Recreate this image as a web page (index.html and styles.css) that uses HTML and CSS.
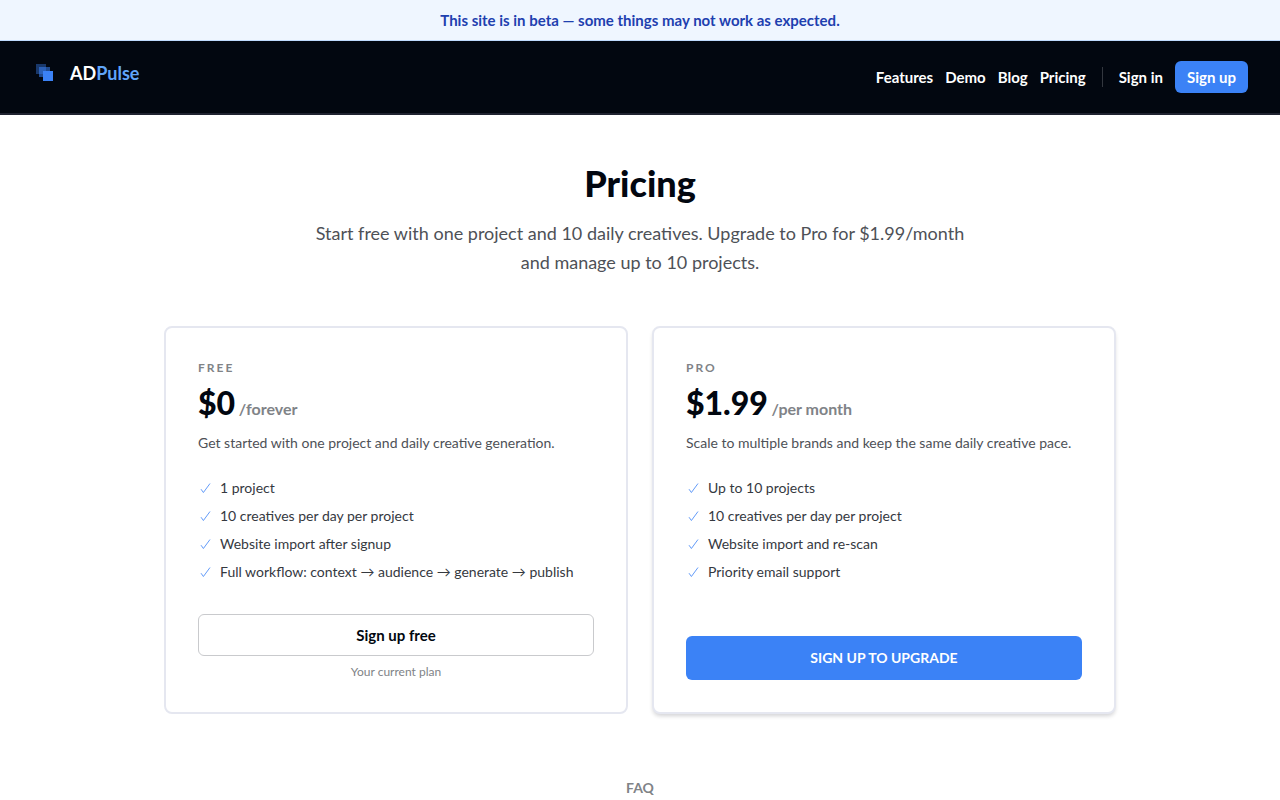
FILE: index.html
```html
<!DOCTYPE html>
<html lang="en">
<head>
    <meta charset="UTF-8">
    <meta name="viewport" content="width=device-width, initial-scale=1">
    <title>Pricing - ADPulse</title>
    <link rel="stylesheet" href="styles.css">
</head>
<body>
    <div class="beta-banner">This site is in beta — some things may not work as expected.</div>

    <header class="header">
        <a href="#" class="logo">
            <svg class="logo-icon" viewBox="0 0 24 24" aria-hidden="true">
                <rect x="4" y="3" width="10" height="10" fill="#3b82f6" opacity="0.4"/>
                <rect x="7" y="6" width="11" height="10" fill="#3b82f6" opacity="0.55"/>
                <rect x="11" y="10" width="10" height="10" fill="#3b82f6"/>
            </svg>
            <span class="logo-text">AD<span class="logo-accent">Pulse</span></span>
        </a>
        <nav class="nav">
            <a href="#features">Features</a>
            <a href="#demo">Demo</a>
            <a href="#blog">Blog</a>
            <a href="#pricing">Pricing</a>
            <span class="nav-divider"></span>
            <a href="#signin">Sign in</a>
            <a href="#signup" class="nav-signup">Sign up</a>
        </nav>
    </header>

    <main class="pricing">
        <h1>Pricing</h1>
        <p class="subtitle">Start free with one project and 10 daily creatives. Upgrade to Pro for $1.99/month and manage up to 10 projects.</p>

        <div class="plans">
            <section class="plan">
                <h2 class="plan-name">Free</h2>
                <p class="price">$0 <span class="period">/forever</span></p>
                <p class="plan-desc">Get started with one project and daily creative generation.</p>
                <ul class="features">
                    <li><svg class="check" viewBox="0 0 14 14"><path d="M3 8.2 5.4 11.5 12 2.5"/></svg>1 project</li>
                    <li><svg class="check" viewBox="0 0 14 14"><path d="M3 8.2 5.4 11.5 12 2.5"/></svg>10 creatives per day per project</li>
                    <li><svg class="check" viewBox="0 0 14 14"><path d="M3 8.2 5.4 11.5 12 2.5"/></svg>Website import after signup</li>
                    <li><svg class="check" viewBox="0 0 14 14"><path d="M3 8.2 5.4 11.5 12 2.5"/></svg>Full workflow: context → audience → generate → publish</li>
                </ul>
                <div class="plan-action">
                    <button type="button" class="btn btn-outline">Sign up free</button>
                    <p class="plan-note">Your current plan</p>
                </div>
            </section>

            <section class="plan plan-pro">
                <h2 class="plan-name">Pro</h2>
                <p class="price">$1.99 <span class="period">/per month</span></p>
                <p class="plan-desc">Scale to multiple brands and keep the same daily creative pace.</p>
                <ul class="features">
                    <li><svg class="check" viewBox="0 0 14 14"><path d="M3 8.2 5.4 11.5 12 2.5"/></svg>Up to 10 projects</li>
                    <li><svg class="check" viewBox="0 0 14 14"><path d="M3 8.2 5.4 11.5 12 2.5"/></svg>10 creatives per day per project</li>
                    <li><svg class="check" viewBox="0 0 14 14"><path d="M3 8.2 5.4 11.5 12 2.5"/></svg>Website import and re-scan</li>
                    <li><svg class="check" viewBox="0 0 14 14"><path d="M3 8.2 5.4 11.5 12 2.5"/></svg>Priority email support</li>
                </ul>
                <div class="plan-action">
                    <button type="button" class="btn btn-primary">Sign up to upgrade</button>
                </div>
            </section>
        </div>

        <h2 class="faq-title">FAQ</h2>
    </main>
</body>
</html>
```

FILE: styles.css
```css
* {
    box-sizing: border-box;
}

body {
    margin: 0;
    background: #ffffff;
    color: #020710;
    font-family: Lato, "Open Sans", sans-serif;
    font-size: 14px;
    line-height: 20px;
}

h1, h2, p, ul {
    margin: 0;
    padding: 0;
}

a {
    color: inherit;
    text-decoration: none;
}

.beta-banner {
    padding: 10px 16px;
    background: #eff6ff;
    border-bottom: 1px solid #bfdbfe;
    color: #1e40af;
    font-size: 15px;
    font-weight: 700;
    text-align: center;
}

/* Header */
.header {
    display: flex;
    justify-content: space-between;
    align-items: flex-start;
    padding: 20px 32px;
    background: #020710;
    border-bottom: 2px solid #1f2330;
    color: #ffffff;
}

.logo {
    display: flex;
    align-items: center;
    gap: 14px;
}

.logo-icon {
    width: 24px;
    height: 24px;
}

.logo-text {
    font-size: 18px;
    font-weight: 700;
    line-height: 24px;
}

.logo-accent {
    color: #60a5fa;
}

.nav {
    display: flex;
    align-items: center;
    gap: 12px;
    font-size: 15px;
    font-weight: 700;
}

.nav-divider {
    width: 1px;
    height: 20px;
    margin: 0 4px;
    background: #33373f;
}

.nav-signup {
    padding: 6px 12px;
    background: #3b82f6;
    border-radius: 6px;
}

/* Pricing */
.pricing {
    max-width: 1000px;
    margin: 0 auto;
    padding: 48px 24px;
}

h1 {
    font-size: 36px;
    font-weight: 900;
    line-height: 40px;
    text-align: center;
}

.subtitle {
    max-width: 672px;
    margin: 16px auto 49px;
    color: #4e5157;
    font-size: 18px;
    line-height: 29px;
    text-align: center;
}

.plans {
    display: grid;
    grid-template-columns: repeat(auto-fit, minmax(320px, 1fr));
    gap: 24px;
}

.plan {
    display: flex;
    flex-direction: column;
    padding: 32px;
    background: #ffffff;
    border: 2px solid #e5e7f0;
    border-radius: 8px;
}

.plan-pro {
    box-shadow: 0 3px 4px -1px rgba(2, 7, 16, 0.18);
}

.plan-name {
    color: #808387;
    font-size: 12px;
    font-weight: 700;
    line-height: 16px;
    letter-spacing: 2px;
    text-transform: uppercase;
}

.price {
    margin-top: 8px;
    font-size: 32px;
    font-weight: 900;
    line-height: 38px;
}

.period {
    margin-left: -4px;
    color: #808387;
    font-size: 16px;
    font-weight: 700;
    line-height: 16px;
}

.plan-desc {
    margin-top: 10px;
    color: #4e5157;
    line-height: 22px;
}

.features {
    display: flex;
    flex-direction: column;
    gap: 8px;
    margin: 24px 0 32px;
    color: #35393f;
    list-style: none;
}

.features li {
    display: flex;
    align-items: center;
    gap: 8px;
}

.check {
    flex: none;
    width: 14px;
    height: 14px;
    fill: none;
    stroke: #3b82f6;
    stroke-width: 0.8;
}

.plan-action {
    margin-top: auto;
}

.btn {
    display: block;
    width: 100%;
    padding: 10px 16px;
    border: 1px solid #c9cacd;
    border-radius: 6px;
    font: inherit;
    font-size: 15px;
    font-weight: 700;
    cursor: pointer;
}

.btn-outline {
    background: #ffffff;
    color: #020710;
}

.btn-primary {
    padding: 12px 16px;
    background: #3b82f6;
    border: none;
    color: #ffffff;
    font-size: 14px;
    text-transform: uppercase;
}

.plan-note {
    margin-top: 8px;
    color: #808387;
    font-size: 12px;
    line-height: 16px;
    text-align: center;
}

.faq-title {
    margin-top: 64px;
    color: #808387;
    font-size: 14px;
    line-height: 20px;
    text-align: center;
}
```
